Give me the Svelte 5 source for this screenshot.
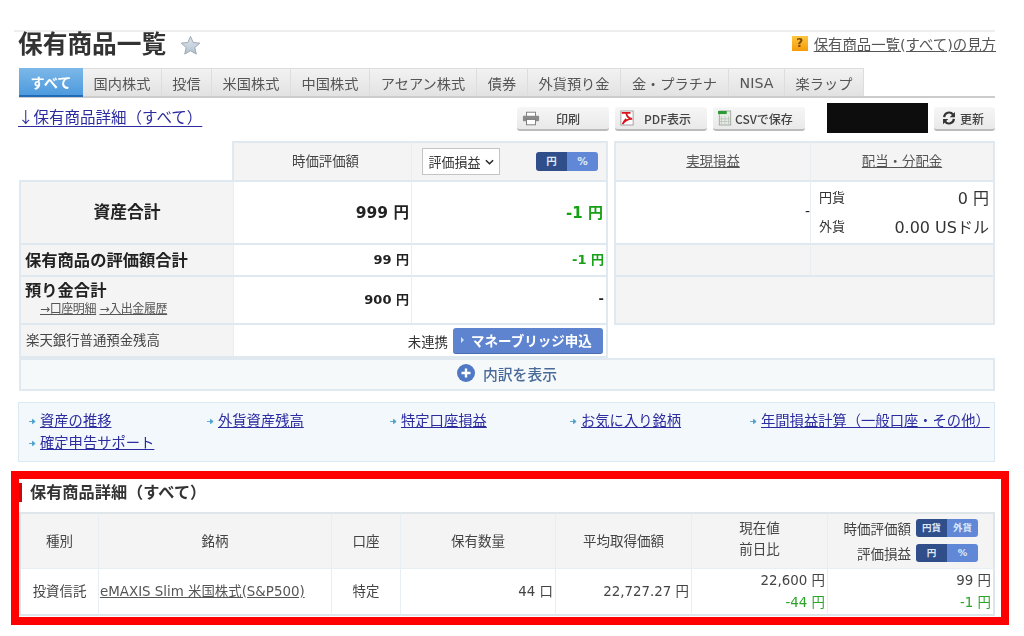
<script>
  const tabs = ['国内株式','投信','米国株式','中国株式','アセアン株式','債券','外貨預り金','金・プラチナ','NISA','楽ラップ'];
  const tabW = [79,50,79,79,107,51,93,108,56,79];
  const links = [['資産の推移',178],['外貨資産残高',183],['特定口座損益',180],['お気に入り銘柄',180],['年間損益計算（一般口座・その他）',240]];
</script>

<div class="page">
  <header class="head">
    <div class="title-wrap">
      <h1>保有商品一覧</h1>
      <svg class="star" viewBox="0 0 24 24" width="21" height="21"><defs><linearGradient id="sg" x1="0" y1="0" x2="0" y2="1"><stop offset="0" stop-color="#dfe6ec"/><stop offset="1" stop-color="#b4c3d0"/></linearGradient></defs><path d="M12 1.600l3.100 7 7.500.7-5.700 5 1.700 7.500L12 18l-6.600 3.800 1.700-7.500-5.700-5 7.500-.7z" fill="url(#sg)" stroke="#98a6b2" stroke-width="1.100"/></svg>
    </div>
    <div class="help">
      <span class="q">?</span>
      <a class="gray" href="#a">保有商品一覧(すべて)の見方</a>
    </div>
  </header>

  <nav class="tabs">
    <span class="tab active">すべて</span>
    {#each tabs as t, i}
      <span class="tab" style:width="{tabW[i]}px">{t}</span>
    {/each}
  </nav>

  <div class="tools">
    <a class="down" href="#a">↓保有商品詳細（すべて）</a>
    <div class="btns">
      <button class="btn wide">
        <svg viewBox="0 0 20 16" width="18" height="15"><rect x="5" y="1" width="10" height="5" fill="#fff" stroke="#777"/><rect x="1" y="5" width="18" height="6" rx="1" fill="#8a8a8a"/><rect x="5" y="9" width="10" height="6" fill="#fff" stroke="#777"/></svg>
        <span class="sp">印刷</span>
      </button>
      <button class="btn wide">
        <svg viewBox="0 0 16 18" width="14" height="16"><rect x="1" y="1" width="14" height="16" fill="#fff" stroke="#999"/><path d="M2 3h10M7 3c1 5 3 7 7 7M7 10c-2 2-3 4-4 6M3 16c2-4 7-6 10-6" stroke="#d8141c" stroke-width="2" fill="none"/></svg>
        <span class="sp2">PDF表示</span>
      </button>
      <button class="btn wide">
        <svg viewBox="0 0 16 18" width="14" height="16"><rect x="1.500" y="1" width="13" height="16" fill="#e9ece6" stroke="#9aa39a"/><rect x="0" y="1" width="10" height="3.500" fill="#2c9a35"/><path d="M4 7v9M8 7v9M12 7v9M2 10h12M2 13h12" stroke="#b6beb6" stroke-width=".8"/></svg>
        <span>CSVで保存</span>
      </button>
      <div class="blackout"></div>
      <button class="btn refresh">
        <svg viewBox="0 0 16 16" width="14" height="14"><path d="M2.400 7A5.700 5.700 0 0 1 12.600 4M13.600 9A5.700 5.700 0 0 1 3.400 12" fill="none" stroke="#333" stroke-width="2.500"/><path d="M14.800 1v6h-6zM1.200 15v-6h6z" fill="#333"/></svg>
        <span>更新</span>
      </button>
    </div>
  </div>

  <section class="summary">
    <div class="tables">
      <table class="sum left">
        <colgroup><col style="width:215px"/><col style="width:178px"/><col/></colgroup>
        <tbody>
          <tr class="r0">
            <td class="blank"></td>
            <th class="top hv">時価評価額</th>
            <th class="top sel">
              <div class="selrow">
                <span class="select">評価損益<svg viewBox="0 0 10 6" width="9" height="6"><path d="M1 1l4 4 4-4" fill="none" stroke="#222" stroke-width="1.600"/></svg></span>
                <span class="toggle"><b>円</b><i>%</i></span>
              </div>
            </th>
          </tr>
          <tr class="r1">
            <th class="big first">資産合計</th>
            <td class="num b big2">999 円</td>
            <td class="num green big3">-1 円</td>
          </tr>
          <tr class="r2">
            <th class="lab first">保有商品の評価額合計</th>
            <td class="num b">99 円</td>
            <td class="num green b">-1 円</td>
          </tr>
          <tr class="r3">
            <th class="lab first two">
              <div>預り金合計</div>
              <div class="sublinks"><a class="gray" href="#a">→口座明細</a> <a class="gray" href="#a">→入出金履歴</a></div>
            </th>
            <td class="num b">900 円</td>
            <td class="num b">-</td>
          </tr>
          <tr class="r4">
            <th class="plain first">楽天銀行普通預金残高</th>
            <td colspan="2" class="bank">
              <div class="bankrow">
                <span>未連携</span>
                <button class="money"><span class="tri"></span>マネーブリッジ申込</button>
              </div>
            </td>
          </tr>
        </tbody>
      </table>
      <table class="sum right">
        <colgroup><col style="width:197px"/><col/></colgroup>
        <tbody>
          <tr class="r0">
            <th class="top first"><a class="gray" href="#a">実現損益</a></th>
            <th class="top"><a class="gray" href="#a">配当・分配金</a></th>
          </tr>
          <tr class="r1">
            <td class="num first dash2">-</td>
            <td class="div">
              <div class="divrow"><span>円貨</span><span class="dv">0 円</span></div>
              <div class="divrow"><span>外貨</span><span class="dv">0.00 USドル</span></div>
            </td>
          </tr>
          <tr class="r2">
            <td class="gr first"></td>
            <td class="gr"></td>
          </tr>
          <tr class="r3">
            <td class="gr first" colspan="2" rowspan="2"></td>
          </tr>
          <tr class="r4"></tr>
        </tbody>
      </table>
    </div>
    <div class="expand">
      <svg viewBox="0 0 18 18" width="18" height="18"><circle cx="9" cy="9" r="9" fill="#4f79c4"/><path d="M9 4.500v9M4.500 9h9" stroke="#fff" stroke-width="2.400"/></svg>
      <span>内訳を表示</span>
    </div>
  </section>

  <div class="linkbox">
    <div class="linkrow">
      {#each links as [t, w]}
        <span class="lk" style:width="{w}px"><svg viewBox="0 0 8 8" width="7" height="7"><path d="M0 4h5M4 1.500L7 4 4 6.500z" stroke="#4aa0c8" fill="#4aa0c8"/></svg><a href="#a">{t}</a></span>
      {/each}
    </div>
    <div class="linkrow">
      <span class="lk"><svg viewBox="0 0 8 8" width="7" height="7"><path d="M0 4h5M4 1.500L7 4 4 6.500z" stroke="#4aa0c8" fill="#4aa0c8"/></svg><a href="#a">確定申告サポート</a></span>
    </div>
  </div>

  <section class="detail">
    <h2>保有商品詳細（すべて）</h2>
    <table class="dt">
      <colgroup>
        <col style="width:80px"/><col style="width:233px"/><col style="width:69px"/><col style="width:155px"/><col style="width:136px"/><col style="width:136px"/><col/>
      </colgroup>
      <tbody>
        <tr class="dh">
          <th>種別</th><th>銘柄</th><th>口座</th><th>保有数量</th><th>平均取得価額</th>
          <th class="cur">現在値<br/>前日比</th>
          <th class="last">
            <div class="tg"><span>時価評価額</span><span class="toggle wide2"><b>円貨</b><i>外貨</i></span></div>
            <div class="tg"><span>評価損益</span><span class="toggle wide2"><b>円</b><i>%</i></span></div>
          </th>
        </tr>
        <tr class="dr">
          <td class="c">投資信託</td>
          <td class="name"><a class="gray" href="#a">eMAXIS Slim 米国株式(S&amp;P500)</a></td>
          <td class="c">特定</td>
          <td class="n">44 口</td>
          <td class="n">22,727.27 円</td>
          <td class="n stack"><div>22,600 円</div><div class="green">-44 円</div></td>
          <td class="n stack"><div>99 円</div><div class="green">-1 円</div></td>
        </tr>
      </tbody>
    </table>
  </section>
</div>

<style>
  :global(body) { margin: 0; background: #fff; }
  .page {
    width: 1024px; height: 636px; box-sizing: border-box; overflow: hidden;
    padding: 30px 29px 0 19px;
    font-family: "DejaVu Sans", "Noto Sans CJK JP", sans-serif;
    color: #333; font-size: 13.500px; filter: blur(.3px); text-spacing-trim: space-all;
  }
  a { color: #2c2ca0; }
  a.gray { color: #555; }
  .head {
    display: flex; justify-content: space-between; align-items: flex-start;
    border-top: 2px solid #eee; margin-left: -5px; padding-left: 4px; height: 36px;
  }
  .title-wrap { display: flex; align-items: center; gap: 14px; height: 24px; padding-top: 1px; }
  h1 { margin: 0; font-size: 24.700px; line-height: 24px; font-weight: 700; color: #333; }
  .help { display: flex; align-items: center; gap: 6px; height: 22px; font-size: 14.400px; margin-top: 0; margin-right: -1px; }
  .q {
    width: 16px; height: 15px; background: linear-gradient(#ffc640,#f59b0a); color: #7a4a00;
    font: bold 12px/15px "DejaVu Sans", sans-serif; text-align: center;
  }
  .tabs { display: flex; height: 28px; border-bottom: 2px solid #ccc; }
  .tab {
    box-sizing: border-box; height: 28px; display: flex; align-items: center; justify-content: center;
    background: linear-gradient(#f2f2f2,#e2e2e2); border: 1px solid #ddd; border-left: 0; border-bottom: 0;
    color: #555; font-size: 14.200px; white-space: nowrap;
  }
  .tab.active {
    width: 64px; background: linear-gradient(#7db8e8,#4d9ade); color: #fff; font-weight: 700;
    border: 0; border-bottom: 2px solid #1e6cb8; height: 29px;
  }
  .tools { display: flex; justify-content: space-between; height: 44px; }
  .down { font-family: "Noto Sans CJK JP", sans-serif; font-size: 15.500px; margin: 8px 0 0 -1px; line-height: 20px; height: 20px; text-underline-offset: 3px; }
  .btns { display: flex; gap: 6px; align-items: flex-start; padding-top: 5px; }
  .btn {
    box-sizing: border-box; height: 24px; border: 0; border-bottom: 2px solid #bbb; border-radius: 3px;
    background: linear-gradient(#f6f6f6,#e9e9e9); color: #444; font: 500 12px "Noto Sans CJK JP", sans-serif;
    display: flex; align-items: center; padding: 0 0 0 5px; gap: 3px; margin-top: 4px;
  }
  .btn.wide { width: 92px; }
  .btn .sp { margin-left: 13px; }
  .btn .sp2 { margin-left: 7px; }
  .btn.refresh { width: 61px; gap: 4px; padding-left: 8px; }
  .blackout { width: 101px; height: 30px; background: #0d0d0d; margin: 0 0 0 16px; }
  .summary { margin-top: -1px; }
  .tables { display: flex; justify-content: space-between; align-items: flex-start; }
  table { border-collapse: separate; border-spacing: 0; table-layout: fixed; }
  .sum.left { width: 589px; }
  .sum.right { width: 381px; }
  .sum td, .sum th {
    box-sizing: border-box; padding: 0 0 3px; font-weight: 400;
    border-bottom: 2px solid #e0e9ef; border-right: 1px solid #e8eff3;
  }
  .sum tr > :last-child { border-right: 2px solid #e0e9ef; }
  .sum .first { border-left: 2px solid #e0e9ef; }
  .sum .r0 > * { height: 41px; }
  .sum .r1 > * { height: 63px; }
  .sum .r2 > * { height: 32px; }
  .sum .r3 > * { height: 48px; }
  .sum .r4 > * { height: 33px; }
  .sum .blank { border-right: 2px solid #e0e9ef; }
  .sum .top { background: #f4f4f4; border-top: 2px solid #e0e9ef; text-align: center; font-size: 13.400px; color: #444; }
  .sum .hv { padding-left: 6px; }
  .sum .sel, .sum .bank { padding-bottom: 0; }
  .selrow { display: flex; align-items: center; justify-content: space-between; padding: 0 8px 0 10px; }
  .select {
    box-sizing: border-box; width: 78px; height: 27px; border: 1px solid #c4c4c4; background: #fff;
    display: flex; align-items: center; justify-content: center; gap: 4px; font-size: 13px; color: #333;
  }
  .toggle { display: inline-flex; width: 62px; height: 19px; border-radius: 3px; overflow: hidden; font-size: 10.500px; line-height: 19px; text-align: center; color: #dfe8f8; }
  .toggle b { flex: 1; background: #2f4e8a; font-weight: 700; }
  .toggle i { flex: 1; background: #6088d6; font-style: normal; font-weight: 700; }
  .sum .big, .sum .lab, .sum .plain { background: #f4f4f4; }
  .sum .big { font-size: 16.800px; font-weight: 700; text-align: center; color: #222; }
  .sum .lab { font-size: 16.300px; font-weight: 700; text-align: left; padding-left: 4px; color: #222; }
  .sum .two { line-height: 21px; vertical-align: top; padding-top: 3px; padding-bottom: 0; }
  .sublinks { font-size: 12px; font-weight: 400; margin-left: 15px; line-height: 17px; letter-spacing: -.4px; }
  .sum .plain { font-size: 13.400px; text-align: left; padding-left: 5px; color: #444; }
  .sum .num { text-align: right; padding-right: 2px; background: #fff; color: #222; }
  .sum .b { font-weight: 700; font-size: 13px; }
  .sum .big2 { font-size: 15.500px; font-weight: 700; }
  .sum .big3 { font-size: 15px; font-weight: 700; padding-right: 3px; }
  .sum .green { color: #15a015; }
  .sum .dash2 { padding-right: 0; font-size: 14px; }
  .sum .div { padding: 0 4px 3px 8px; }
  .divrow { display: flex; justify-content: space-between; align-items: center; height: 29px; font-size: 13px; }
  .dv { font-size: 16px; }
  .sum .gr { background: #f4f4f4; }
  .bankrow { display: flex; justify-content: flex-end; align-items: center; gap: 5px; padding-right: 3px; font-size: 13.400px; }
  .money {
    box-sizing: border-box; width: 150px; height: 26px; border: 0; border-bottom: 1px solid #4a6cb0; border-radius: 3px;
    background: #5f84cf; color: #fff; font: 700 13.500px "Noto Sans CJK JP", sans-serif;
    display: flex; align-items: center; gap: 7px; padding: 0 0 0 8px;
  }
  .tri { width: 0; height: 0; border-left: 3px solid #d6e2f6; border-top: 3px solid transparent; border-bottom: 3px solid transparent; }
  .expand {
    box-sizing: border-box; height: 33px; background: #f6f9fa; border: 2px solid #e0e9ef; padding-bottom: 3px;
    display: flex; align-items: center; justify-content: center; gap: 8px; color: #4a6a9a; font-weight: 500; font-size: 14.800px;
  }
  .linkbox {
    box-sizing: border-box; height: 60px; margin: 11px 0 0 -1px; background: #f3f8fc; border: 1px solid #dbe9f2;
    padding: 7px 0 0 10px; font-size: 14.300px; line-height: 22px;
  }
  .linkrow { display: flex; height: 22px; }
  .lk { display: inline-flex; align-items: center; gap: 4px; white-space: nowrap; }
  .detail {
    box-sizing: border-box; width: 998px; height: 154px; margin: 9px 0 0 -8px; border: 8px solid #f00;
    background: #fff;
  }
  h2 {
    margin: 4px 0 0; height: 19px; line-height: 19px; font-size: 16.200px; font-weight: 700; color: #333;
    border-left: 3px solid #c80a0a; padding-left: 8px;
  }
  .dt { width: 976px; margin-top: 10px; }
  .dt th, .dt td { box-sizing: border-box; padding: 0 0 3px; font-weight: 400; border-right: 1px solid #e8eff3; border-bottom: 2px solid #dfe6ea; color: #444; }
  .dt tr > :first-child { border-left: 2px solid #dfe6ea; }
  .dt tr > :last-child { border-right: 2px solid #dfe6ea; }
  .dt .dh th { height: 57px; background: #f4f4f4; text-align: center; font-size: 13.500px; border-top: 2px solid #dfe6ea; border-bottom: 1px solid #e8eff3; }
  .dt .dr td { height: 47px; background: #fff; font-size: 13.400px; }
  .dt .cur { line-height: 21px; padding-bottom: 4px; }
  .dt .last { padding-bottom: 0; }
  .tg { display: flex; justify-content: flex-end; align-items: center; gap: 5px; height: 25px; padding-right: 15px; }
  .tg:first-child { margin-top: -2px; }
  .wide2 { width: 62px; height: 18px; line-height: 18px; font-size: 9.500px; }
  .dt .c { text-align: center; }
  .dt .name { padding-left: 1px; }
  .dt .n { text-align: right; padding-right: 2px; }
  .dt .stack { padding-bottom: 0; }
  .stack div { line-height: 22px; }
  .dt .stack .green { color: #2aa52a; }
</style>
